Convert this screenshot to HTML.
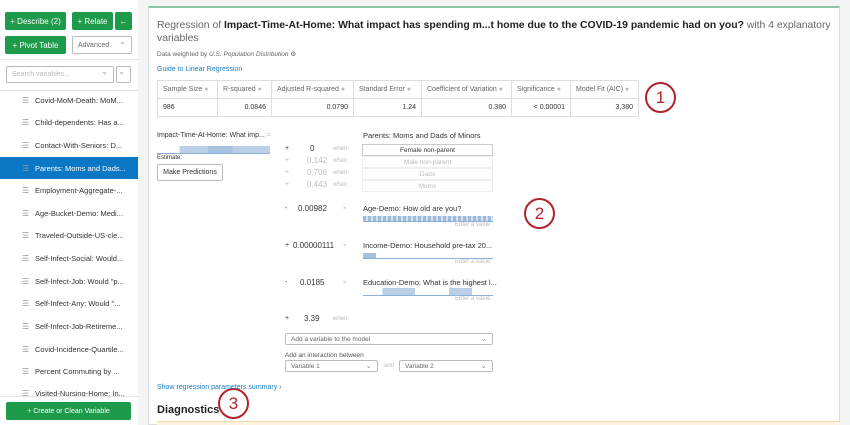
<!DOCTYPE html>
<html><head><meta charset="utf-8"><style>
*{box-sizing:border-box;margin:0;padding:0}
body{width:850px;height:425px;overflow:hidden;background:#f3f4f4;font-family:"Liberation Sans",sans-serif;position:relative;color:#333}
.a{position:absolute;white-space:nowrap}
.btn{position:absolute;background:#1e9a4b;color:#fff;font-size:8px;border-radius:2px;display:flex;align-items:center;justify-content:center}
.sel{position:absolute;border:1px solid #bbb;background:#fff;border-radius:2px;font-size:7px;color:#666;padding-left:5px;display:flex;align-items:center}
.sel:after{content:"⌄";position:absolute;right:5px;top:0;font-size:8px;color:#999}
.li{position:absolute;left:0;width:138px;height:22px;font-size:7.5px;display:flex;align-items:center;padding-left:35px;color:#333}
.li:before{content:"☰";position:absolute;left:22px;font-size:8px;color:#999}
table{border-collapse:collapse;position:absolute;left:157px;top:80px;font-size:7px}
td{border:1px solid #ddd;height:18px;padding:0 5px;color:#666}
td.v{text-align:right;color:#333}
.g{color:#bbb}
.circ{position:absolute;width:31px;height:31px;border:2.5px solid #b3232a;border-radius:50%;color:#b3232a;font-size:17px;display:flex;align-items:center;justify-content:center}
.hist{position:absolute;height:8px;border-bottom:1px solid #8ab0d6}
.bx{position:absolute;left:362px;width:131px;height:12px;border:1px solid #eee;font-size:6.5px;text-align:center;line-height:11px;color:#bbb}
.ev{position:absolute;font-size:6px;color:#bbb}
</style></head><body>
<div class="a" style="left:0;top:0;width:138px;height:425px;background:#fff"></div>
<div class="btn" style="left:5px;top:12px;width:61px;height:18px">+ Describe (2)</div>
<div class="btn" style="left:72px;top:12px;width:41px;height:18px">+ Relate</div>
<div class="btn" style="left:115px;top:12px;width:17px;height:18px">←</div>
<div class="btn" style="left:5px;top:36px;width:61px;height:18px">+ Pivot Table</div>
<div class="sel" style="left:72px;top:36px;width:60px;height:18px">Advanced</div>
<div class="a" style="left:0;top:59px;width:138px;border-top:1px solid #e4e4e4"></div>
<div class="sel" style="left:6px;top:66px;width:108px;height:17px;color:#bbb">Search variables...</div>
<div class="sel" style="left:116px;top:66px;width:15px;height:17px"></div>
<div class="a" style="left:0;top:90px;width:138px;border-top:1px solid #e4e4e4"></div>
<div class="li" style="top:89px">Covid-MoM-Death: MoM...</div>
<div class="li" style="top:111px">Child-dependents: Has a...</div>
<div class="li" style="top:134px">Contact-With-Seniors: D...</div>
<div class="li" style="top:157px;background:#0b78c6;color:#fff">Parents: Moms and Dads...</div>
<div class="li" style="top:179px">Employment-Aggregate-...</div>
<div class="li" style="top:202px">Age-Bucket-Demo: Medi...</div>
<div class="li" style="top:224px">Traveled-Outside-US-cle...</div>
<div class="li" style="top:247px">Self-Infect-Social: Would...</div>
<div class="li" style="top:270px">Self-Infect-Job: Would "p...</div>
<div class="li" style="top:292px">Self-Infect-Any: Would "...</div>
<div class="li" style="top:315px">Self-Infect-Job-Retireme...</div>
<div class="li" style="top:338px">Covid-Incidence-Quartile...</div>
<div class="li" style="top:360px">Percent Commuting by ...</div>
<div class="li" style="top:382px">Visited-Nursing-Home: In...</div>
<div class="a" style="left:0;top:396px;width:138px;height:29px;background:#fff;border-top:1px solid #e4e4e4"></div>
<div class="btn" style="left:6px;top:402px;width:125px;height:18px;font-size:7px">+ Create or Clean Variable</div>

<div class="a" style="left:148px;top:6px;width:692px;height:419px;background:#fff;border:1px solid #ddd;border-top:2px solid #8fc5a8"></div>
<div class="a" style="left:157px;top:20px;font-size:10.4px;color:#666">Regression of <b style="color:#222">Impact-Time-At-Home: What impact has spending m...t home due to the COVID-19 pandemic had on you?</b> with 4 explanatory</div>
<div class="a" style="left:157px;top:33px;font-size:10.4px;color:#666">variables</div>
<div class="a" style="left:157px;top:50px;font-size:6.5px;color:#666">Data weighted by <i>U.S. Population Distribution</i> ⚙</div>
<div class="a" style="left:157px;top:66px;font-size:7px;color:#1a7fc1">Guide to Linear Regression</div>
<table>
<tr><td style="width:60px">Sample Size <span class="g">●</span></td><td style="width:54px">R-squared <span class="g">●</span></td><td style="width:82px">Adjusted R-squared <span class="g">●</span></td><td style="width:68px">Standard Error <span class="g">●</span></td><td style="width:90px">Coefficient of Variation <span class="g">●</span></td><td style="width:59px">Significance <span class="g">●</span></td><td style="width:68px">Model Fit (AIC) <span class="g">●</span></td></tr>
<tr><td style="color:#333">986</td><td class="v">0.0846</td><td class="v">0.0790</td><td class="v">1.24</td><td class="v">0.380</td><td class="v">&lt; 0.00001</td><td class="v">3,380</td></tr>
</table>
<div class="circ" style="left:645px;top:82px">1</div>
<div class="circ" style="left:524px;top:198px">2</div>
<div class="circ" style="left:218px;top:388px">3</div>

<div class="a" style="left:157px;top:132px;font-size:7px">Impact-Time-At-Home: What imp... <span class="g">=</span></div>
<div class="hist" style="left:157px;top:146px;width:113px;background:linear-gradient(90deg,transparent 20%,#b9d0e8 20%,#b9d0e8 45%,#a5c2e0 45%,#a5c2e0 67%,#b9d0e8 67%)"></div>
<div class="a" style="left:157px;top:155px;font-size:6px">Estimate:</div>
<div class="a" style="left:157px;top:164px;width:66px;height:17px;border:1px solid #bbb;border-radius:2px;font-size:7px;text-align:center;line-height:15px">Make Predictions</div>

<div class="a" style="left:285px;top:145px;font-size:7px">+</div><div class="a" style="left:310px;top:144px;font-size:8px">0</div><div class="ev" style="left:333px;top:146px">when</div>
<div class="a g" style="left:285px;top:157px;font-size:7px">+</div><div class="a g" style="left:307px;top:156px;font-size:8px">0.142</div><div class="ev" style="left:333px;top:158px">when</div>
<div class="a g" style="left:285px;top:169px;font-size:7px">+</div><div class="a g" style="left:307px;top:168px;font-size:8px">0.706</div><div class="ev" style="left:333px;top:170px">when</div>
<div class="a g" style="left:285px;top:181px;font-size:7px">+</div><div class="a g" style="left:307px;top:180px;font-size:8px">0.443</div><div class="ev" style="left:333px;top:182px">when</div>
<div class="a" style="left:363px;top:131px;font-size:7.5px">Parents: Moms and Dads of Minors</div>
<div class="bx" style="top:144px;color:#333;border-color:#ccc">Female non-parent</div>
<div class="bx" style="top:156px">Male non-parent</div>
<div class="bx" style="top:168px">Dads</div>
<div class="bx" style="top:180px">Moms</div>

<div class="a" style="left:285px;top:205px;font-size:7px">-</div><div class="a" style="left:298px;top:204px;font-size:8px">0.00982</div><div class="ev" style="left:343px;top:206px">×</div>
<div class="a" style="left:363px;top:204px;font-size:7.5px">Age-Demo: How old are you?</div>
<div class="hist" style="left:363px;top:214px;width:130px;height:6px;top:216px;background:repeating-linear-gradient(90deg,#9dbbdc 0 3px,#d3e1f0 3px 5px)"></div>
<div class="ev" style="left:455px;top:222px">Enter a value</div>

<div class="a" style="left:285px;top:242px;font-size:7px">+</div><div class="a" style="left:293px;top:241px;font-size:8px">0.00000111</div><div class="ev" style="left:343px;top:243px">×</div>
<div class="a" style="left:363px;top:241px;font-size:7.5px">Income-Demo: Household pre-tax 20...</div>
<div class="hist" style="left:363px;top:253px;height:6px;width:130px;background:linear-gradient(90deg,#a5c2e0 0 10%,transparent 10%)"></div>
<div class="ev" style="left:455px;top:259px">Enter a value</div>

<div class="a" style="left:285px;top:279px;font-size:7px">-</div><div class="a" style="left:300px;top:278px;font-size:8px">0.0185</div><div class="ev" style="left:343px;top:280px">×</div>
<div class="a" style="left:363px;top:278px;font-size:7.5px">Education-Demo: What is the highest l...</div>
<div class="hist" style="left:363px;top:288px;width:130px;background:linear-gradient(90deg,transparent 15%,#b9d0e8 15%,#b9d0e8 40%,transparent 40%,transparent 66%,#b9d0e8 66%,#b9d0e8 84%,transparent 84%)"></div>
<div class="ev" style="left:455px;top:296px">Enter a value</div>

<div class="a" style="left:285px;top:315px;font-size:7px">+</div><div class="a" style="left:304px;top:314px;font-size:8px">3.39</div><div class="ev" style="left:333px;top:316px">when</div>

<div class="sel" style="left:285px;top:333px;width:208px;height:12px;font-size:6.5px">Add a variable to the model</div>
<div class="a" style="left:285px;top:352px;font-size:6.5px;color:#555">Add an interaction between</div>
<div class="sel" style="left:285px;top:360px;width:93px;height:12px;font-size:6.5px">Variable 1</div>
<div class="a" style="left:384px;top:363px;font-size:6px;color:#bbb">and</div>
<div class="sel" style="left:399px;top:360px;width:94px;height:12px;font-size:6.5px">Variable 2</div>
<div class="a" style="left:157px;top:384px;font-size:7px;color:#1a7fc1">Show regression parameters summary ›</div>
<div class="a" style="left:157px;top:404px;font-size:11px;font-weight:bold;color:#222">Diagnostics</div>
<div class="a" style="left:157px;top:421px;width:683px;height:4px;background:#fdf3e0;border-top:1px solid #f3d9a8"></div>
</body></html>
